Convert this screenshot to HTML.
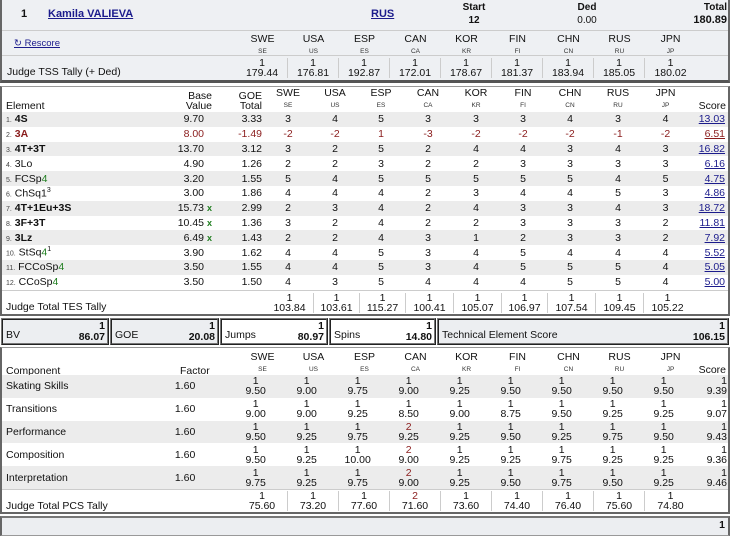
<!DOCTYPE html>
<html><head><meta charset="utf-8"><style>
*{box-sizing:border-box;margin:0;padding:0}
body{width:730px;height:527px;overflow:hidden;background:#fff;font-family:"Liberation Sans",Arial,sans-serif;font-size:10.5px;color:#111;position:relative}
.abs{position:absolute}
.panel{position:absolute;border:1px solid #999;border-left:2px solid #666;border-right:2px solid #666}
.row{position:absolute;left:0;right:0;display:flex;align-items:center}
.c{text-align:center;flex:none}
.r{text-align:right;flex:none}
.sm{font-size:6.5px;color:#333;display:block;margin-top:3px}
.lnk{color:#1b1b8c;text-decoration:underline}
.red{color:#8a1c1c}
.g{color:#1e7d1e}
.b{font-weight:bold}
.num{font-size:7px;color:#444}
.grey{background:#ececec}
/* top / pcs judge columns */
.j1{width:51px}
/* element cols */
.el{width:160px;padding-left:4px}
.bv{width:54px;padding-right:2px}
.goe{width:48px}
.sc{width:38px;padding-right:2px}
.two{line-height:10px}
</style></head><body>

<!-- TOP PANEL -->
<div class="panel" style="left:0;top:0;width:730px;height:83px;background:#eef0f3;border-top:0;border-bottom:3px solid #555">
  <div class="abs b" style="left:19px;top:8px;font-size:11px">1</div>
  <div class="abs b lnk" style="left:46px;top:8px;font-size:11px">Kamila VALIEVA</div>
  <div class="abs b lnk" style="left:369px;top:8px;font-size:11px">RUS</div>
  <div class="abs b c" style="left:452px;top:1px;width:40px;font-size:10px;line-height:13px">Start<br>12</div>
  <div class="abs b c" style="left:565px;top:1px;width:40px;font-size:10px;line-height:13px">Ded<br><span style="font-weight:normal">0.00</span></div>
  <div class="abs b r" style="left:680px;top:1px;width:45px;font-size:10px;line-height:13px">Total<br><span style="font-size:11px">180.89</span></div>
  <div class="abs" style="left:0;right:0;top:30px;border-top:1px solid #ccc"></div>
  <div class="abs lnk" style="left:12px;top:38px;font-size:9.5px">↻ Rescore</div>
  <div class="row" style="top:32px;height:24px;left:235px">
    <div class="c j1">SWE<span class="sm">SE</span></div><div class="c j1">USA<span class="sm">US</span></div><div class="c j1">ESP<span class="sm">ES</span></div><div class="c j1">CAN<span class="sm">CA</span></div><div class="c j1">KOR<span class="sm">KR</span></div><div class="c j1">FIN<span class="sm">FI</span></div><div class="c j1">CHN<span class="sm">CN</span></div><div class="c j1">RUS<span class="sm">RU</span></div><div class="c j1">JPN<span class="sm">JP</span></div>
  </div>
  <div class="abs" style="left:0;right:0;top:55px;border-top:1px solid #ccc"></div>
  <div class="abs" style="left:5px;top:66px">Judge TSS Tally (+ Ded)</div>
  <div class="row two" style="top:57px;height:22px;left:235px">
    <div class="c j1" style="border-right:1px solid #ccc">1<br>179.44</div><div class="c j1" style="border-right:1px solid #ccc">1<br>176.81</div><div class="c j1" style="border-right:1px solid #ccc">1<br>192.87</div><div class="c j1" style="border-right:1px solid #ccc">1<br>172.01</div><div class="c j1" style="border-right:1px solid #ccc">1<br>178.67</div><div class="c j1" style="border-right:1px solid #ccc">1<br>181.37</div><div class="c j1" style="border-right:1px solid #ccc">1<br>183.94</div><div class="c j1" style="border-right:1px solid #ccc">1<br>185.05</div><div class="c j1">1<br>180.02</div>
  </div>
</div>

<!-- ELEMENT PANEL -->
<div class="panel" style="left:0;top:86px;width:730px;height:230px;border-bottom:2px solid #666">
  <div class="row" style="top:1px;height:24px;line-height:10px;align-items:flex-end;padding-bottom:1px">
    <div class="el">Element</div>
    <div class="r bv" style="width:52px">Base<br>Value</div>
    <div class="r goe" style="width:50px;padding-right:2px">GOE<br>Total</div>
    <div class="c" style="width:48px">SWE<span class="sm">SE</span></div><div class="c" style="width:46px">USA<span class="sm">US</span></div><div class="c" style="width:46px">ESP<span class="sm">ES</span></div><div class="c" style="width:48px">CAN<span class="sm">CA</span></div><div class="c" style="width:48px">KOR<span class="sm">KR</span></div><div class="c" style="width:46px">FIN<span class="sm">FI</span></div><div class="c" style="width:48px">CHN<span class="sm">CN</span></div><div class="c" style="width:48px">RUS<span class="sm">RU</span></div><div class="c" style="width:47px">JPN<span class="sm">JP</span></div>
    <div class="r" style="width:37px">Score</div>
  </div>
  <style>
   .er{position:absolute;left:0;right:0;height:14.8px;display:flex;align-items:center}
   .er .el{width:160px;padding-left:4px}
   .er .bv{width:52px;text-align:right}
   .er .gt{width:50px;text-align:right;padding-right:2px}
   .er .j{text-align:center;flex:none}
   .w48{width:48px}.w46{width:46px}.w47{width:47px}
   .er .x{display:inline-block;width:8px;text-align:right;color:#1e7d1e;font-weight:bold;font-size:9px}
  </style>
  <div class="er grey" style="top:25px"><div class="el"><span class="num">1.</span> <b>4S</b></div><div class="bv">9.70<span class="x"></span></div><div class="gt">3.33</div><div class="j w48">3</div><div class="j w46">4</div><div class="j w46">5</div><div class="j w48">3</div><div class="j w48">3</div><div class="j w46">3</div><div class="j w48">4</div><div class="j w48">3</div><div class="j w47">4</div><div class="r sc lnk">13.03</div></div>
  <div class="er red" style="top:39.8px"><div class="el"><span class="num">2.</span> <b>3A</b></div><div class="bv">8.00<span class="x"></span></div><div class="gt">-1.49</div><div class="j w48">-2</div><div class="j w46">-2</div><div class="j w46">1</div><div class="j w48">-3</div><div class="j w48">-2</div><div class="j w46">-2</div><div class="j w48">-2</div><div class="j w48">-1</div><div class="j w47">-2</div><div class="r sc" style="text-decoration:underline">6.51</div></div>
  <div class="er grey" style="top:54.6px"><div class="el"><span class="num">3.</span> <b>4T+3T</b></div><div class="bv">13.70<span class="x"></span></div><div class="gt">3.12</div><div class="j w48">3</div><div class="j w46">2</div><div class="j w46">5</div><div class="j w48">2</div><div class="j w48">4</div><div class="j w46">4</div><div class="j w48">3</div><div class="j w48">4</div><div class="j w47">3</div><div class="r sc lnk">16.82</div></div>
  <div class="er" style="top:69.4px"><div class="el"><span class="num">4.</span> 3Lo</div><div class="bv">4.90<span class="x"></span></div><div class="gt">1.26</div><div class="j w48">2</div><div class="j w46">2</div><div class="j w46">3</div><div class="j w48">2</div><div class="j w48">2</div><div class="j w46">3</div><div class="j w48">3</div><div class="j w48">3</div><div class="j w47">3</div><div class="r sc lnk">6.16</div></div>
  <div class="er grey" style="top:84.2px"><div class="el"><span class="num">5.</span> FCSp<span class="g">4</span></div><div class="bv">3.20<span class="x"></span></div><div class="gt">1.55</div><div class="j w48">5</div><div class="j w46">4</div><div class="j w46">5</div><div class="j w48">5</div><div class="j w48">5</div><div class="j w46">5</div><div class="j w48">5</div><div class="j w48">4</div><div class="j w47">5</div><div class="r sc lnk">4.75</div></div>
  <div class="er" style="top:99px"><div class="el"><span class="num">6.</span> ChSq1<sup style="font-size:7px">3</sup></div><div class="bv">3.00<span class="x"></span></div><div class="gt">1.86</div><div class="j w48">4</div><div class="j w46">4</div><div class="j w46">4</div><div class="j w48">2</div><div class="j w48">3</div><div class="j w46">4</div><div class="j w48">4</div><div class="j w48">5</div><div class="j w47">3</div><div class="r sc lnk">4.86</div></div>
  <div class="er grey" style="top:113.8px"><div class="el"><span class="num">7.</span> <b>4T+1Eu+3S</b></div><div class="bv">15.73<span class="x">x</span></div><div class="gt">2.99</div><div class="j w48">2</div><div class="j w46">3</div><div class="j w46">4</div><div class="j w48">2</div><div class="j w48">4</div><div class="j w46">3</div><div class="j w48">3</div><div class="j w48">4</div><div class="j w47">3</div><div class="r sc lnk">18.72</div></div>
  <div class="er" style="top:128.6px"><div class="el"><span class="num">8.</span> <b>3F+3T</b></div><div class="bv">10.45<span class="x">x</span></div><div class="gt">1.36</div><div class="j w48">3</div><div class="j w46">2</div><div class="j w46">4</div><div class="j w48">2</div><div class="j w48">2</div><div class="j w46">3</div><div class="j w48">3</div><div class="j w48">3</div><div class="j w47">2</div><div class="r sc lnk">11.81</div></div>
  <div class="er grey" style="top:143.4px"><div class="el"><span class="num">9.</span> <b>3Lz</b></div><div class="bv">6.49<span class="x">x</span></div><div class="gt">1.43</div><div class="j w48">2</div><div class="j w46">2</div><div class="j w46">4</div><div class="j w48">3</div><div class="j w48">1</div><div class="j w46">2</div><div class="j w48">3</div><div class="j w48">3</div><div class="j w47">2</div><div class="r sc lnk">7.92</div></div>
  <div class="er" style="top:158.2px"><div class="el"><span class="num">10.</span> StSq<span class="g">4</span><sup style="font-size:7px">1</sup></div><div class="bv">3.90<span class="x"></span></div><div class="gt">1.62</div><div class="j w48">4</div><div class="j w46">4</div><div class="j w46">5</div><div class="j w48">3</div><div class="j w48">4</div><div class="j w46">5</div><div class="j w48">4</div><div class="j w48">4</div><div class="j w47">4</div><div class="r sc lnk">5.52</div></div>
  <div class="er grey" style="top:173px"><div class="el"><span class="num">11.</span> FCCoSp<span class="g">4</span></div><div class="bv">3.50<span class="x"></span></div><div class="gt">1.55</div><div class="j w48">4</div><div class="j w46">4</div><div class="j w46">5</div><div class="j w48">3</div><div class="j w48">4</div><div class="j w46">5</div><div class="j w48">5</div><div class="j w48">5</div><div class="j w47">4</div><div class="r sc lnk">5.05</div></div>
  <div class="er" style="top:187.8px"><div class="el"><span class="num">12.</span> CCoSp<span class="g">4</span></div><div class="bv">3.50<span class="x"></span></div><div class="gt">1.50</div><div class="j w48">4</div><div class="j w46">3</div><div class="j w46">5</div><div class="j w48">4</div><div class="j w48">4</div><div class="j w46">4</div><div class="j w48">5</div><div class="j w48">5</div><div class="j w47">4</div><div class="r sc lnk">5.00</div></div>
  <div class="abs" style="left:0;right:0;top:203px;border-top:1px solid #ccc"></div>
  <div class="abs" style="left:4px;top:214px">Judge Total TES Tally</div>
  <div class="row two" style="top:204px;height:23px;left:264px">
    <div class="c" style="width:48px;border-right:1px solid #ccc">1<br>103.84</div><div class="c" style="width:46px;border-right:1px solid #ccc">1<br>103.61</div><div class="c" style="width:46px;border-right:1px solid #ccc">1<br>115.27</div><div class="c" style="width:48px;border-right:1px solid #ccc">1<br>100.41</div><div class="c" style="width:48px;border-right:1px solid #ccc">1<br>105.07</div><div class="c" style="width:46px;border-right:1px solid #ccc">1<br>106.97</div><div class="c" style="width:48px;border-right:1px solid #ccc">1<br>107.54</div><div class="c" style="width:48px;border-right:1px solid #ccc">1<br>109.45</div><div class="c" style="width:47px">1<br>105.22</div>
  </div>
</div>

<!-- SUMMARY BOXES -->
<style>.box{position:absolute;top:318px;height:27px;border:2px solid #777;border-style:ridge}.box .l{position:absolute;left:3px;bottom:2px}.box .v{position:absolute;right:2px;top:1px;text-align:right;font-weight:bold;line-height:11px}</style>
<div class="box" style="left:1px;width:108px;background:#eceef1"><span class="l">BV</span><span class="v">1<br>86.07</span></div>
<div class="box" style="left:110px;width:109px;background:#eceef1"><span class="l">GOE</span><span class="v">1<br>20.08</span></div>
<div class="box" style="left:220px;width:108px;background:#fff"><span class="l">Jumps</span><span class="v">1<br>80.97</span></div>
<div class="box" style="left:329px;width:107px;background:#fff"><span class="l">Spins</span><span class="v">1<br>14.80</span></div>
<div class="box" style="left:437px;width:292px;background:#eceef1"><span class="l">Technical Element Score</span><span class="v">1<br>106.15</span></div>

<!-- PCS PANEL -->
<div class="panel" style="left:0;top:347px;width:730px;height:167px;border-bottom:2px solid #666">
  <div class="abs" style="left:4px;top:17px">Component</div>
  <div class="abs" style="left:178px;top:17px">Factor</div>
  <div class="row" style="top:2px;height:24px;left:235px">
    <div class="c j1">SWE<span class="sm">SE</span></div><div class="c j1">USA<span class="sm">US</span></div><div class="c j1">ESP<span class="sm">ES</span></div><div class="c j1">CAN<span class="sm">CA</span></div><div class="c j1">KOR<span class="sm">KR</span></div><div class="c j1">FIN<span class="sm">FI</span></div><div class="c j1">CHN<span class="sm">CN</span></div><div class="c j1">RUS<span class="sm">RU</span></div><div class="c j1">JPN<span class="sm">JP</span></div>
  </div>
  <div class="abs" style="right:2px;top:16px">Score</div>
  <style>
   .pr{position:absolute;left:0;right:0;height:22.8px;display:flex;align-items:center;line-height:10px}
   .pr .n{width:178px;padding-left:4px}.pr .f{width:57px}
   .pr .j1{text-align:center;flex:none}
   .pr .s{width:40px;text-align:right;padding-right:1px}
  </style>
  <div class="pr grey" style="top:27px"><div class="n">Skating Skills</div><div class="f">1.60</div><div class="j1">1<br>9.50</div><div class="j1">1<br>9.00</div><div class="j1">1<br>9.75</div><div class="j1">1<br>9.00</div><div class="j1">1<br>9.25</div><div class="j1">1<br>9.50</div><div class="j1">1<br>9.50</div><div class="j1">1<br>9.50</div><div class="j1">1<br>9.50</div><div class="s">1<br>9.39</div></div>
  <div class="pr" style="top:49.8px"><div class="n">Transitions</div><div class="f">1.60</div><div class="j1">1<br>9.00</div><div class="j1">1<br>9.00</div><div class="j1">1<br>9.25</div><div class="j1">1<br>8.50</div><div class="j1">1<br>9.00</div><div class="j1">1<br>8.75</div><div class="j1">1<br>9.50</div><div class="j1">1<br>9.25</div><div class="j1">1<br>9.25</div><div class="s">1<br>9.07</div></div>
  <div class="pr grey" style="top:72.6px"><div class="n">Performance</div><div class="f">1.60</div><div class="j1">1<br>9.50</div><div class="j1">1<br>9.25</div><div class="j1">1<br>9.75</div><div class="j1"><span class="red">2</span><br>9.25</div><div class="j1">1<br>9.25</div><div class="j1">1<br>9.50</div><div class="j1">1<br>9.25</div><div class="j1">1<br>9.75</div><div class="j1">1<br>9.50</div><div class="s">1<br>9.43</div></div>
  <div class="pr" style="top:95.4px"><div class="n">Composition</div><div class="f">1.60</div><div class="j1">1<br>9.50</div><div class="j1">1<br>9.25</div><div class="j1">1<br>10.00</div><div class="j1"><span class="red">2</span><br>9.00</div><div class="j1">1<br>9.25</div><div class="j1">1<br>9.25</div><div class="j1">1<br>9.75</div><div class="j1">1<br>9.25</div><div class="j1">1<br>9.25</div><div class="s">1<br>9.36</div></div>
  <div class="pr grey" style="top:118.2px"><div class="n">Interpretation</div><div class="f">1.60</div><div class="j1">1<br>9.75</div><div class="j1">1<br>9.25</div><div class="j1">1<br>9.75</div><div class="j1"><span class="red">2</span><br>9.00</div><div class="j1">1<br>9.25</div><div class="j1">1<br>9.50</div><div class="j1">1<br>9.75</div><div class="j1">1<br>9.50</div><div class="j1">1<br>9.25</div><div class="s">1<br>9.46</div></div>
  <div class="abs" style="left:0;right:0;top:141px;border-top:1px solid #ccc"></div>
  <div class="abs" style="left:4px;top:152px">Judge Total PCS Tally</div>
  <div class="row two" style="top:142px;height:22px;left:235px">
    <div class="c j1" style="border-right:1px solid #ccc">1<br>75.60</div><div class="c j1" style="border-right:1px solid #ccc">1<br>73.20</div><div class="c j1" style="border-right:1px solid #ccc">1<br>77.60</div><div class="c j1" style="border-right:1px solid #ccc"><span class="red">2</span><br>71.60</div><div class="c j1" style="border-right:1px solid #ccc">1<br>73.60</div><div class="c j1" style="border-right:1px solid #ccc">1<br>74.40</div><div class="c j1" style="border-right:1px solid #ccc">1<br>76.40</div><div class="c j1" style="border-right:1px solid #ccc">1<br>75.60</div><div class="c j1">1<br>74.80</div>
  </div>
</div>

<!-- BOTTOM PANEL -->
<div class="panel" style="left:0;top:516px;width:730px;height:20px;background:#eceef1;border-top:2px solid #777">
  <div class="abs b" style="right:3px;top:1px">1</div>
</div>
</body></html>
